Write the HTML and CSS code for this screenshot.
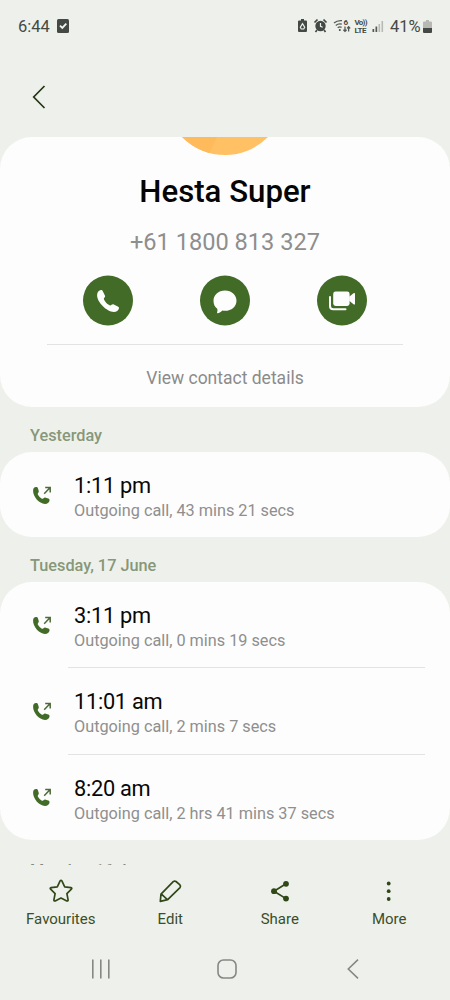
FILE: index.html
```html
<!DOCTYPE html>
<html lang="en">
<head>
<meta charset="utf-8">
<title>Hesta Super</title>
<link rel="stylesheet" href="styles.css">
</head>
<body>
<svg class="defs" width="0" height="0">
  <symbol id="outgoing" viewBox="0 0 20 20">
    <path class="green" d="M1.100 5.200C1.200 3.200 2.500 2.200 4 2.100c1 0 1.700.5 2 1.400l.7 2.300c.3 1-.1 1.500-.6 2.200-.5.700-.4 1.200 0 1.900.9 1.500 2 2.700 3.400 3.500.8.500 1.400.4 2-.2.700-.7 1.300-.9 2.300-.5l2.500.9c1 .4 1.400 1.100 1.200 2.100-.4 1.700-2.100 3.200-4.500 3.200C7.200 18.700.8 11.600 1.100 5.200z"/>
    <path class="arrow" d="M12.200 8.700l5.700-6M13.200 2.500h5v5"/>
  </symbol>
</svg>
<div class="screen">
  <header class="status">
    <span class="clock">6:44</span>
    <svg class="task" width="12" height="14" viewBox="0 0 12 14"><rect width="12" height="14" rx="1.500" fill="#454945"/><path d="M3 6.600l2.300 2.300 4-4.300" fill="none" stroke="#f3f5f1" stroke-width="1.800"/></svg>
    <svg class="tray" width="88" height="18" viewBox="0 0 88 18">
      <g fill="#454945">
        <path d="M3 3.500h2V2h3v1.500h2q1 0 1 1V14q0 1-1 1H3q-1 0-1-1V4.500q0-1 1-1z"/>
        <path d="M4.300 10.300l2.200-3.600 2.200 3.600-1 1.700H5.300z" fill="none" stroke="#eef0eb" stroke-width="1.200"/>
        <circle cx="24.500" cy="9" r="5.200"/>
        <path d="M18.500 5.500l3-3M30.500 5.500l-3-3M21 13l-1.500 2M28 13l1.500 2" stroke="#454945" stroke-width="1.700"/>
        <path d="M24.500 6v3.300l2.200 1" fill="none" stroke="#eef0eb" stroke-width="1.200"/>
      </g>
      <g fill="none" stroke="#555955" stroke-width="1.300">
        <path d="M38 6q3-2.700 8-2.300M39.800 8.500q2.500-2.200 6-1.300M41.700 10.800q1.900-1.500 3.900-.4"/>
        <path d="M49 9.500v5M47.400 12.700l1.600 1.700 1.600-1.700M52.600 14.500V9.800M51.100 11.400l1.500-1.700 1.600 1.700"/>
      </g>
      <circle cx="43.800" cy="13" r="1" fill="#454945"/>
      <text class="tiny" x="47.500" y="8">6</text>
      <text class="tiny" x="58.500" y="8.200" textLength="13">Vo))</text>
      <text class="tiny" x="58.500" y="15.500" textLength="12">LTE</text>
      <g><rect x="76.500" y="12" width="1.700" height="3" fill="#555955"/><rect x="79.500" y="9.500" width="1.700" height="5.500" fill="#555955"/><rect x="82.500" y="7" width="1.600" height="8" fill="#b7bab5"/><rect x="85.500" y="4" width="1.600" height="11" fill="#b7bab5"/></g>
    </svg>
    <span class="percent">41%</span>
    <svg class="battery" width="9" height="13" viewBox="0 0 9 13"><path d="M1 1.500h2V0h3v1.500h2q1 0 1 1V8H0V2.500q0-1 1-1z" fill="#b5b8b3"/><path d="M0 8h9V12q0 1-1 1H1q-1 0-1-1z" fill="#454945"/></svg>
  </header>

  <nav class="toolbar">
    <svg width="14" height="24" viewBox="0 0 14 24"><path d="M12.500 1L1.700 12l10.800 11" class="back"/></svg>
  </nav>

  <main class="content">
    <section class="card profile">
      <svg class="avatar" width="90" height="18" viewBox="0 0 90 18"><circle cx="45" cy="-42" r="60" fill="#ffc163"/><path d="M0 0h37l-8 18H0z" fill="#ffbb5b" clip-path="url(#disc)"/><clipPath id="disc"><circle cx="45" cy="-42" r="60"/></clipPath></svg>
      <h1 class="name">Hesta Super</h1>
      <p class="number">+61 1800 813 327</p>
      <div class="actions">
        <svg width="50" height="51" viewBox="0 -.5 50 51"><circle cx="25" cy="25" r="25" class="green"/><path fill="#fdfdfd" d="M14.100 19.600c.1-3 1.700-5 4-5.100.9 0 1.400.4 1.700 1.200l2.100 4.200c.4.900.2 1.500-.5 2.200-.8 1-.6 1.600 0 2.600 1.300 2.200 2.500 3.400 4.400 4.600 1.200.8 1.800.8 2.700 0 .8-.7 1.400-.8 2.300-.4l4 2c.9.500 1.400 1 1.200 1.900-.5 2.300-2.500 3.700-5.200 3.700-7-.2-16.900-9.600-16.700-16.900z"/></svg>
        <svg width="50" height="51" viewBox="0 -.5 50 51"><circle cx="25" cy="25" r="25" class="green"/><path fill="#fdfdfd" d="M25 15c6.600 0 11.500 4.400 11.500 10.200S31.600 35.300 25 35.300c-1 0-1.900-.1-2.700-.3-1.200 1.400-2.900 2.400-4.700 2.800-.5.100-.7-.300-.5-.7.400-1.100.5-2.300.2-3.800-2.500-1.800-3.800-4.700-3.800-8.100C13.500 19.400 18.400 15 25 15z"/></svg>
        <svg width="50" height="51" viewBox="0 -.5 50 51"><circle cx="25" cy="25" r="25" class="green"/><rect x="16.200" y="16" width="16.400" height="14.500" rx="2.400" fill="#fdfdfd"/><path d="M32.200 21.300l4.300-3.500q1.500-1 1.500.4v10q0 1.500-1.500.5l-4.300-3.400z" fill="#fdfdfd"/><path d="M13 21.500V30.500q0 3.300 3.300 3.300h12.200" fill="none" stroke="#fdfdfd" stroke-width="2" stroke-linecap="round"/></svg>
      </div>
      <div class="details">View contact details</div>
    </section>

    <h2 class="day">Yesterday</h2>
    <section class="card calls">
      <article class="call"><svg class="out" width="20" height="20"><use href="#outgoing"/></svg><div class="info"><div class="time">1:11 pm</div><div class="sub">Outgoing call, 43 mins 21 secs</div></div></article>
    </section>

    <h2 class="day">Tuesday, 17 June</h2>
    <section class="card calls">
      <article class="call"><svg class="out" width="20" height="20"><use href="#outgoing"/></svg><div class="info"><div class="time">3:11 pm</div><div class="sub">Outgoing call, 0 mins 19 secs</div></div></article>
      <article class="call"><svg class="out" width="20" height="20"><use href="#outgoing"/></svg><div class="info"><div class="time">11:01 am</div><div class="sub">Outgoing call, 2 mins 7 secs</div></div></article>
      <article class="call"><svg class="out" width="20" height="20"><use href="#outgoing"/></svg><div class="info"><div class="time">8:20 am</div><div class="sub">Outgoing call, 2 hrs 41 mins 37 secs</div></div></article>
    </section>

    <h2 class="day next">Monday, 16 June</h2>
  </main>

  <footer class="tabs">
    <div class="tab"><svg width="26" height="26" viewBox="0 0 26 26"><path class="line" d="M12.100 2.900q.9-1.300 1.800 0l2.800 5.900 6.200.8q1.500.4.5 1.600L18.900 15.600l1.200 6.200q.1 1.600-1.300 1.100L13 20.100 7.200 22.900q-1.400.5-1.300-1.100L7.100 15.600 2.600 11.200q-1-1.200.5-1.600l6.200-.8z"/></svg>Favourites</div>
    <div class="tab"><svg width="26" height="26" viewBox="0 0 26 26"><path class="line" d="M3.300 23.400l.7-7.300L16.200 3.700q1.400-1.200 2.800-.2l3.700 3.100q1.500 1.500.3 3L10.700 21.600zM4.200 15.900l6.200 5.700"/></svg>Edit</div>
    <div class="tab"><svg width="26" height="26" viewBox="0 0 26 26"><path class="line" d="M19 5.800L7 13.200 19 20.600"/><g class="dark"><circle cx="19" cy="5.800" r="2.900"/><circle cx="7" cy="13.200" r="2.900"/><circle cx="19" cy="20.600" r="2.900"/></g></svg>Share</div>
    <div class="tab"><svg width="26" height="26" viewBox="0 0 26 26"><g class="dark"><circle cx="12.700" cy="5.500" r="1.900"/><circle cx="12.700" cy="13.200" r="1.900"/><circle cx="12.700" cy="21" r="1.900"/></g></svg>More</div>
  </footer>

  <nav class="system">
    <svg width="20" height="20" viewBox="0 0 20 20"><path d="M1.800.5v19M9.800.5v19M17.800.5v19"/></svg>
    <svg class="home" width="20" height="20" viewBox="0 0 20 20"><rect x="1" y="1" width="18" height="18" rx="5.500"/></svg>
    <svg width="12" height="20" viewBox="0 0 12 20"><path d="M11 .7L1.300 10 11 19.300"/></svg>
  </nav>
</div>
</body>
</html>
```
FILE: styles.css
```css
* { box-sizing: border-box; }
body { margin: 0; background: #eef1eb; font-family: Roboto, sans-serif; }
h1, h2, p { margin: 0; }
svg { display: block; flex: none; }
.defs { position: absolute; }
.screen { width: 450px; height: 1000px; display: flex; flex-direction: column; overflow: hidden; }

.status { height: 52px; flex: none; display: flex; align-items: center; padding: 0 18px; color: #454945; font-size: 16.5px; }
.clock { width: 39px; white-space: nowrap; }
.tray { margin-left: 227px; }
.percent { width: 33px; margin-left: 6px; }
.tiny { font-size: 8px; font-weight: 700; fill: #454945; }

.toolbar { height: 85px; flex: none; padding: 33px 0 0 32px; }
.back { fill: none; stroke: #253514; stroke-width: 1.7; }

.content { height: 728px; flex: none; overflow: hidden; }
.card { background: #fdfdfd; border-radius: 32px; }
.profile { height: 270px; display: flex; flex-direction: column; align-items: center; }
.name { margin-top: 17px; height: 40px; line-height: 40px; font-size: 31.2px; font-weight: 500; color: #050505; white-space: nowrap; }
.number { margin-top: 15px; height: 30px; line-height: 30px; font-size: 23.6px; color: #8e8e8e; white-space: nowrap; }
.actions { margin-top: 18px; width: 284px; display: flex; justify-content: space-between; }
.details { margin-top: 18px; width: 356px; height: 62px; border-top: 1px solid #e3e3e3; padding-top: 3px; line-height: 60px; text-align: center; font-size: 17.5px; color: #8b8b8b; }
.green { fill: #426b27; }

.day { height: 45px; padding: 13px 0 0 30px; line-height: 32px; font-size: 16.3px; font-weight: 500; color: #879779; }
.call { display: flex; align-items: center; height: 85px; padding-left: 32px; position: relative; }
.call + .call { height: 87px; }
.call + .call:last-child { height: 86px; }
.call + .call::before { content: ""; position: absolute; top: 0; left: 68px; right: 25px; height: 1px; background: #e2e3e2; }
.info { margin-left: 22px; padding-top: 6px; white-space: nowrap; }
.call + .call .info { padding-top: 6px; }
.call + .call:last-child .info { padding-top: 8px; }
.time { font-size: 21.8px; line-height: 26px; letter-spacing: -0.3px; color: #080808; }
.sub { font-size: 16.25px; line-height: 24px; color: #8f8f8f; }
.arrow { fill: none; stroke: #4e6a3b; stroke-width: 1.5; }
.next { padding-top: 15px; color: #858b80; }

.tabs { height: 70px; flex: none; display: flex; justify-content: center; padding: 13px 6px 0; }
.tab { width: 109.5px; display: flex; flex-direction: column; align-items: center; gap: 5px; font-size: 15px; line-height: 20px; color: #3b4e29; }
.line { fill: none; stroke: #304818; stroke-width: 1.7; stroke-linejoin: round; }
.dark { fill: #304818; }
.system { display: flex; justify-content: space-between; padding: 24px 91px 0 91px; }
.home { margin-right: 5px; }
.system svg { fill: none; stroke: #858885; stroke-width: 1.6; }
```
